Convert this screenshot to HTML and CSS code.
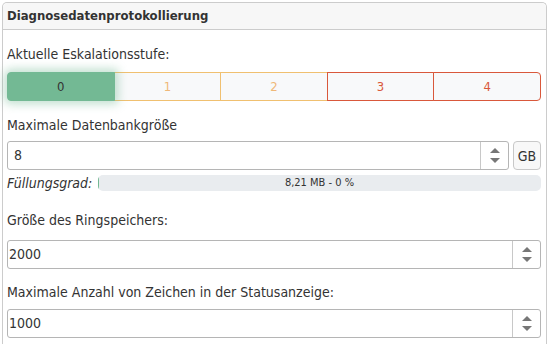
FILE: index.html
```html
<!DOCTYPE html>
<html lang="de">
<head>
<meta charset="utf-8">
<link rel="stylesheet" href="styles.css">
</head>
<body>
<div class="panel">
  <div class="panel-head">Diagnosedatenprotokollierung</div>
  <div class="panel-body">
    <div class="label l1">Aktuelle Eskalationsstufe:</div>
    <div class="levels">
      <div class="lvl active">0</div>
      <div class="lvl warn">1</div>
      <div class="lvl warn">2</div>
      <div class="lvl err">3</div>
      <div class="lvl err">4</div>
    </div>
    <div class="label l2">Maximale Datenbankgröße</div>
    <div class="input-row">
      <div class="num">
        <span class="val wide">8</span>
        <span class="spin"><i class="up"></i><i class="down"></i></span>
      </div>
      <div class="unit">GB</div>
    </div>
    <div class="fill-row">
      <span class="fill-label">Füllungsgrad:</span>
      <div class="progress"><div class="bar" style="width:1px"></div><span class="ptext">8,21 MB - 0 %</span></div>
    </div>
    <div class="label l3">Größe des Ringspeichers:</div>
    <div class="num full">
      <span class="val">2000</span>
      <span class="spin"><i class="up"></i><i class="down"></i></span>
    </div>
    <div class="label l4">Maximale Anzahl von Zeichen in der Statusanzeige:</div>
    <div class="num full">
      <span class="val">1000</span>
      <span class="spin"><i class="up"></i><i class="down"></i></span>
    </div>
  </div>
</div>
</body>
</html>
```
FILE: styles.css
```css
html, body { margin: 0; padding: 0; background: #fff; }
body {
  font-family: "DejaVu Sans Condensed", "DejaVu Sans", sans-serif;
  font-size: 14px;
  color: #333;
  overflow: hidden;
  height: 344px;
}
.panel {
  margin: 2px 1px 0 2px;
  border: 1px solid #ccc;
  border-bottom: none;
  border-radius: 5px 5px 0 0;
  height: 342px;
  box-sizing: border-box;
}
.panel-head {
  height: 26px;
  line-height: 26px;
  background: #f7f7f7;
  border-bottom: 1px solid #ccc;
  border-radius: 5px 5px 0 0;
  padding: 0 5px 0 4px;
  font-weight: bold;
  font-size: 13px;
  color: #333;
}
.panel-body { padding: 0 5px 0 4px; }
.label { line-height: 20px; }
.l1 { margin-top: 14px; }
.l2 { margin-top: 14px; }
.l3 { margin-top: 19px; }
.l4 { margin-top: 13px; }
.levels {
  display: flex;
  margin-top: 8px;
  height: 29px;
  font-size: 13px;
}
.lvl {
  flex: 1;
  display: flex;
  align-items: center;
  justify-content: center;
  background: #f8f9fa;
  border: 1px solid;
  box-sizing: border-box;
}
.lvl + .lvl { margin-left: -1px; }
.lvl.active {
  background: #73b994;
  border-color: #73b994;
  color: #333;
  border-radius: 4px 0 0 4px;
  box-shadow: 0 0 10px 3px rgba(115, 185, 148, 0.45);
  position: relative;
  z-index: 1;
}
.lvl.warn { border-color: #f0c070; color: #efb878; }
.lvl.err { border-color: #d9583b; color: #d9583b; }
.lvl:last-child { border-radius: 0 4px 4px 0; }
.input-row { display: flex; margin-top: 6px; gap: 4px; }
.num {
  flex: 1;
  display: flex;
  height: 29px;
  box-sizing: border-box;
  border: 1px solid #b5b5b5;
  border-radius: 3px;
  background: #fff;
}
.num.full { margin-top: 10px; }
.l4 + .num.full { margin-top: 7px; }
.val {
  flex: 1;
  padding-left: 1px;
  line-height: 27px;
  font-size: 14px;
}
.val.wide { padding-left: 6px; }
.spin {
  width: 27px;
  border-left: 1px solid #c8c8c8;
  display: flex;
  flex-direction: column;
  align-items: center;
  justify-content: center;
  gap: 5px;
}
.spin i { display: block; width: 0; height: 0; border-left: 5px solid transparent; border-right: 5px solid transparent; }
.spin .up { border-bottom: 5px solid #777; }
.spin .down { border-top: 5px solid #777; }
.unit {
  width: 28px;
  height: 29px;
  box-sizing: border-box;
  border: 1px solid #c8c8c8;
  border-radius: 4px;
  background: #f8f8f8;
  display: flex;
  align-items: center;
  justify-content: center;
  font-size: 14px;
}
.fill-row {
  display: flex;
  align-items: center;
  margin-top: 5px;
  height: 16px;
}
.fill-label { font-style: italic; width: 91px; flex: none; white-space: nowrap; }
.progress {
  flex: 1;
  height: 16px;
  background: #e9ecef;
  border-radius: 5px;
  position: relative;
  overflow: hidden;
}
.bar { height: 100%; background: #73b994; }
.ptext {
  position: absolute;
  left: 0; right: 0; top: 0;
  text-align: center;
  font-size: 11px;
  line-height: 16px;
  color: #333;
}
```
